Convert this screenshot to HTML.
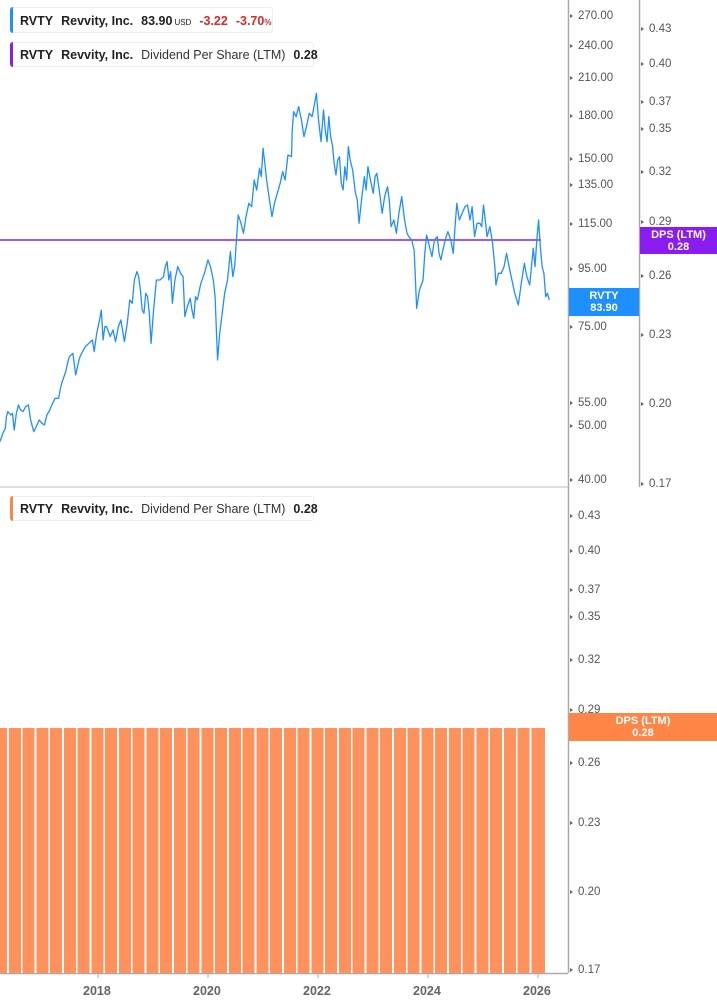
<!DOCTYPE html>
<html><head><meta charset="utf-8"><style>
body{margin:0;width:717px;height:1005px;background:#fff;position:relative;overflow:hidden;font-family:"Liberation Sans",Arial,sans-serif}
.lg{position:absolute;left:10px;height:25px;border:1px solid #eceef2;border-radius:3px;background:#fff;font-size:12.5px;font-weight:bold;color:#222;line-height:25px;padding-left:9px;box-sizing:border-box;white-space:nowrap}
.lg:before{content:"";position:absolute;left:-1px;top:-1px;bottom:-1px;width:3px;border-radius:3px 0 0 3px;background:var(--c)}
.lg span{margin-right:8px}
.n{font-weight:normal}
.ax{position:absolute;font-size:11.5px;color:#555}
.tk{position:absolute;width:0;height:0;border-left:3px solid #666;border-top:2.5px solid transparent;border-bottom:2.5px solid transparent}
.box{position:absolute;color:#fff;font-weight:bold;font-size:11px;text-align:center;line-height:12px;padding-top:2px;box-sizing:border-box}
.yr{position:absolute;top:984px;font-size:12.5px;font-weight:bold;color:#666}
.bars{position:absolute;left:0;top:728px;width:545px;height:245px;background:repeating-linear-gradient(90deg,#fe915c 0 12px,#fff 12px 13.75px);background-position:-5px 0}
</style></head><body>
<svg width="717" height="1005" style="position:absolute;left:0;top:0">
<line x1="568.5" y1="0" x2="568.5" y2="973" stroke="#aaa" stroke-width="1.5"/>
<line x1="639.5" y1="0" x2="639.5" y2="487" stroke="#aaa" stroke-width="1.5"/>
<line x1="0" y1="487" x2="568" y2="487" stroke="#bbb" stroke-width="1"/>
<line x1="0" y1="973.5" x2="568" y2="973.5" stroke="#aaa" stroke-width="1.5"/>
<line x1="98" y1="973" x2="98" y2="978" stroke="#aaa"/><line x1="208" y1="973" x2="208" y2="978" stroke="#aaa"/><line x1="318" y1="973" x2="318" y2="978" stroke="#aaa"/><line x1="428" y1="973" x2="428" y2="978" stroke="#aaa"/><line x1="538" y1="973" x2="538" y2="978" stroke="#aaa"/>
<line x1="0" y1="240" x2="541" y2="240" stroke="#8a1cf0" stroke-width="1.5"/>
<g transform="translate(0,80) scale(0.3555,0.3333)">
<polyline fill="none" stroke="#1e8fff" stroke-width="1.3" vector-effect="non-scaling-stroke" stroke-linejoin="round" points="0,1085 8,1060 15,1045 18,1010 22,995 30,1005 35,1000 40,1050 46,1000 52,975 58,990 65,995 72,980 80,975 86,1020 95,1055 102,1040 110,1020 118,1030 125,1035 132,1005 140,990 148,970 155,955 165,955 170,925 175,905 185,875 190,850 195,830 205,820 213,885 220,850 225,830 232,815 240,800 250,790 260,780 265,815 272,760 280,720 285,690 290,780 295,740 300,740 310,770 318,750 325,785 333,740 340,720 350,785 358,730 365,660 372,670 378,600 385,575 390,590 395,630 400,690 405,700 410,640 415,650 420,700 425,790 432,690 440,600 450,600 460,590 465,560 470,545 475,600 480,575 485,670 492,600 500,560 508,580 515,590 520,710 527,680 535,655 540,690 545,715 550,650 555,660 565,610 575,580 585,540 592,560 600,600 605,650 612,840 618,760 625,700 632,640 640,600 648,515 655,590 660,560 667,450 670,405 678,430 685,460 692,410 700,370 708,380 715,300 722,330 730,265 735,290 740,205 745,250 750,300 758,360 765,410 772,370 780,340 788,310 795,275 802,300 810,225 820,230 822,150 826,95 833,110 840,80 848,120 855,170 862,140 870,100 878,110 885,70 890,40 896,120 903,185 907,130 910,90 915,150 920,185 925,110 930,170 935,195 940,250 945,285 950,240 955,230 960,310 965,330 970,260 975,300 980,200 985,240 992,270 1000,340 1005,360 1010,430 1018,350 1025,290 1030,330 1035,260 1042,300 1050,340 1055,290 1060,280 1068,340 1075,400 1082,350 1090,320 1095,360 1100,440 1108,420 1115,460 1122,400 1130,350 1138,420 1145,460 1150,470 1158,480 1165,510 1172,685 1180,630 1190,600 1195,520 1200,465 1208,500 1215,530 1222,480 1230,470 1235,520 1240,540 1248,500 1255,470 1260,455 1268,480 1275,520 1280,440 1285,370 1292,420 1300,400 1308,380 1315,375 1322,420 1328,380 1335,470 1342,430 1350,430 1355,440 1360,375 1365,420 1370,470 1378,440 1385,485 1392,560 1395,615 1402,580 1410,580 1418,560 1425,520 1432,560 1440,600 1448,640 1458,675 1465,620 1475,550 1482,590 1490,615 1495,560 1500,505 1505,560 1510,480 1515,420 1520,500 1525,560 1530,580 1535,650 1540,640 1545,660"/>
</g>
</svg>
<div class="bars"></div>

<div class="lg" style="--c:#1e8fff;top:7px;width:263px;height:26px;line-height:26px"><span>RVTY</span><span>Revvity, Inc.</span><span style="margin-right:2px">83.90</span><span style="font-size:8px;font-weight:normal">USD</span><span style="color:#d62b2b">-3.22</span><span style="color:#d62b2b;margin-right:0">-3.70<small style="font-size:8px">%</small></span></div>
<div class="lg" style="--c:#8a1cf0;top:42px;width:304px"><span>RVTY</span><span>Revvity, Inc.</span><span class="n" style="color:#333">Dividend Per Share (LTM)</span><span>0.28</span></div>
<div class="lg" style="--c:#fe8545;top:496px;width:304px"><span>RVTY</span><span>Revvity, Inc.</span><span class="n" style="color:#333">Dividend Per Share (LTM)</span><span>0.28</span></div>

<div class="tk" style="left:570px;top:14px"></div><div class="ax" style="left:578px;top:10px">270.00</div>
<div class="tk" style="left:570px;top:44px"></div><div class="ax" style="left:578px;top:40px">240.00</div>
<div class="tk" style="left:570px;top:76px"></div><div class="ax" style="left:578px;top:72px">210.00</div>
<div class="tk" style="left:570px;top:114px"></div><div class="ax" style="left:578px;top:110px">180.00</div>
<div class="tk" style="left:570px;top:157px"></div><div class="ax" style="left:578px;top:153px">150.00</div>
<div class="tk" style="left:570px;top:183px"></div><div class="ax" style="left:578px;top:179px">135.00</div>
<div class="tk" style="left:570px;top:222px"></div><div class="ax" style="left:578px;top:218px">115.00</div>
<div class="tk" style="left:570px;top:267px"></div><div class="ax" style="left:578px;top:263px">95.00</div>
<div class="tk" style="left:570px;top:325px"></div><div class="ax" style="left:578px;top:321px">75.00</div>
<div class="tk" style="left:570px;top:401px"></div><div class="ax" style="left:578px;top:397px">55.00</div>
<div class="tk" style="left:570px;top:424px"></div><div class="ax" style="left:578px;top:420px">50.00</div>
<div class="tk" style="left:570px;top:478px"></div><div class="ax" style="left:578px;top:474px">40.00</div>

<div class="tk" style="left:641px;top:27px"></div><div class="ax" style="left:649px;top:23px">0.43</div>
<div class="tk" style="left:641px;top:62px"></div><div class="ax" style="left:649px;top:58px">0.40</div>
<div class="tk" style="left:641px;top:100px"></div><div class="ax" style="left:649px;top:96px">0.37</div>
<div class="tk" style="left:641px;top:127px"></div><div class="ax" style="left:649px;top:123px">0.35</div>
<div class="tk" style="left:641px;top:170px"></div><div class="ax" style="left:649px;top:166px">0.32</div>
<div class="tk" style="left:641px;top:220px"></div><div class="ax" style="left:649px;top:216px">0.29</div>
<div class="tk" style="left:641px;top:274px"></div><div class="ax" style="left:649px;top:270px">0.26</div>
<div class="tk" style="left:641px;top:333px"></div><div class="ax" style="left:649px;top:329px">0.23</div>
<div class="tk" style="left:641px;top:402px"></div><div class="ax" style="left:649px;top:398px">0.20</div>
<div class="tk" style="left:641px;top:482px"></div><div class="ax" style="left:649px;top:478px">0.17</div>

<div class="tk" style="left:570px;top:514px"></div><div class="ax" style="left:578px;top:510px">0.43</div>
<div class="tk" style="left:570px;top:549px"></div><div class="ax" style="left:578px;top:545px">0.40</div>
<div class="tk" style="left:570px;top:588px"></div><div class="ax" style="left:578px;top:584px">0.37</div>
<div class="tk" style="left:570px;top:615px"></div><div class="ax" style="left:578px;top:611px">0.35</div>
<div class="tk" style="left:570px;top:658px"></div><div class="ax" style="left:578px;top:654px">0.32</div>
<div class="tk" style="left:570px;top:708px"></div><div class="ax" style="left:578px;top:704px">0.29</div>
<div class="tk" style="left:570px;top:761px"></div><div class="ax" style="left:578px;top:757px">0.26</div>
<div class="tk" style="left:570px;top:821px"></div><div class="ax" style="left:578px;top:817px">0.23</div>
<div class="tk" style="left:570px;top:890px"></div><div class="ax" style="left:578px;top:886px">0.20</div>
<div class="tk" style="left:570px;top:968px"></div><div class="ax" style="left:578px;top:964px">0.17</div>

<div class="box" style="left:569px;top:288px;width:70px;height:28px;background:#1e8fff">RVTY<br>83.90</div>
<div class="box" style="left:640px;top:227px;width:77px;height:27px;background:#8a1cf0">DPS (LTM)<br>0.28</div>
<div class="box" style="left:569px;top:713px;width:148px;height:28px;background:#fe8545">DPS (LTM)<br>0.28</div>

<div class="yr" style="left:83px">2018</div>
<div class="yr" style="left:193px">2020</div>
<div class="yr" style="left:303px">2022</div>
<div class="yr" style="left:413px">2024</div>
<div class="yr" style="left:523px">2026</div>
</body></html>
